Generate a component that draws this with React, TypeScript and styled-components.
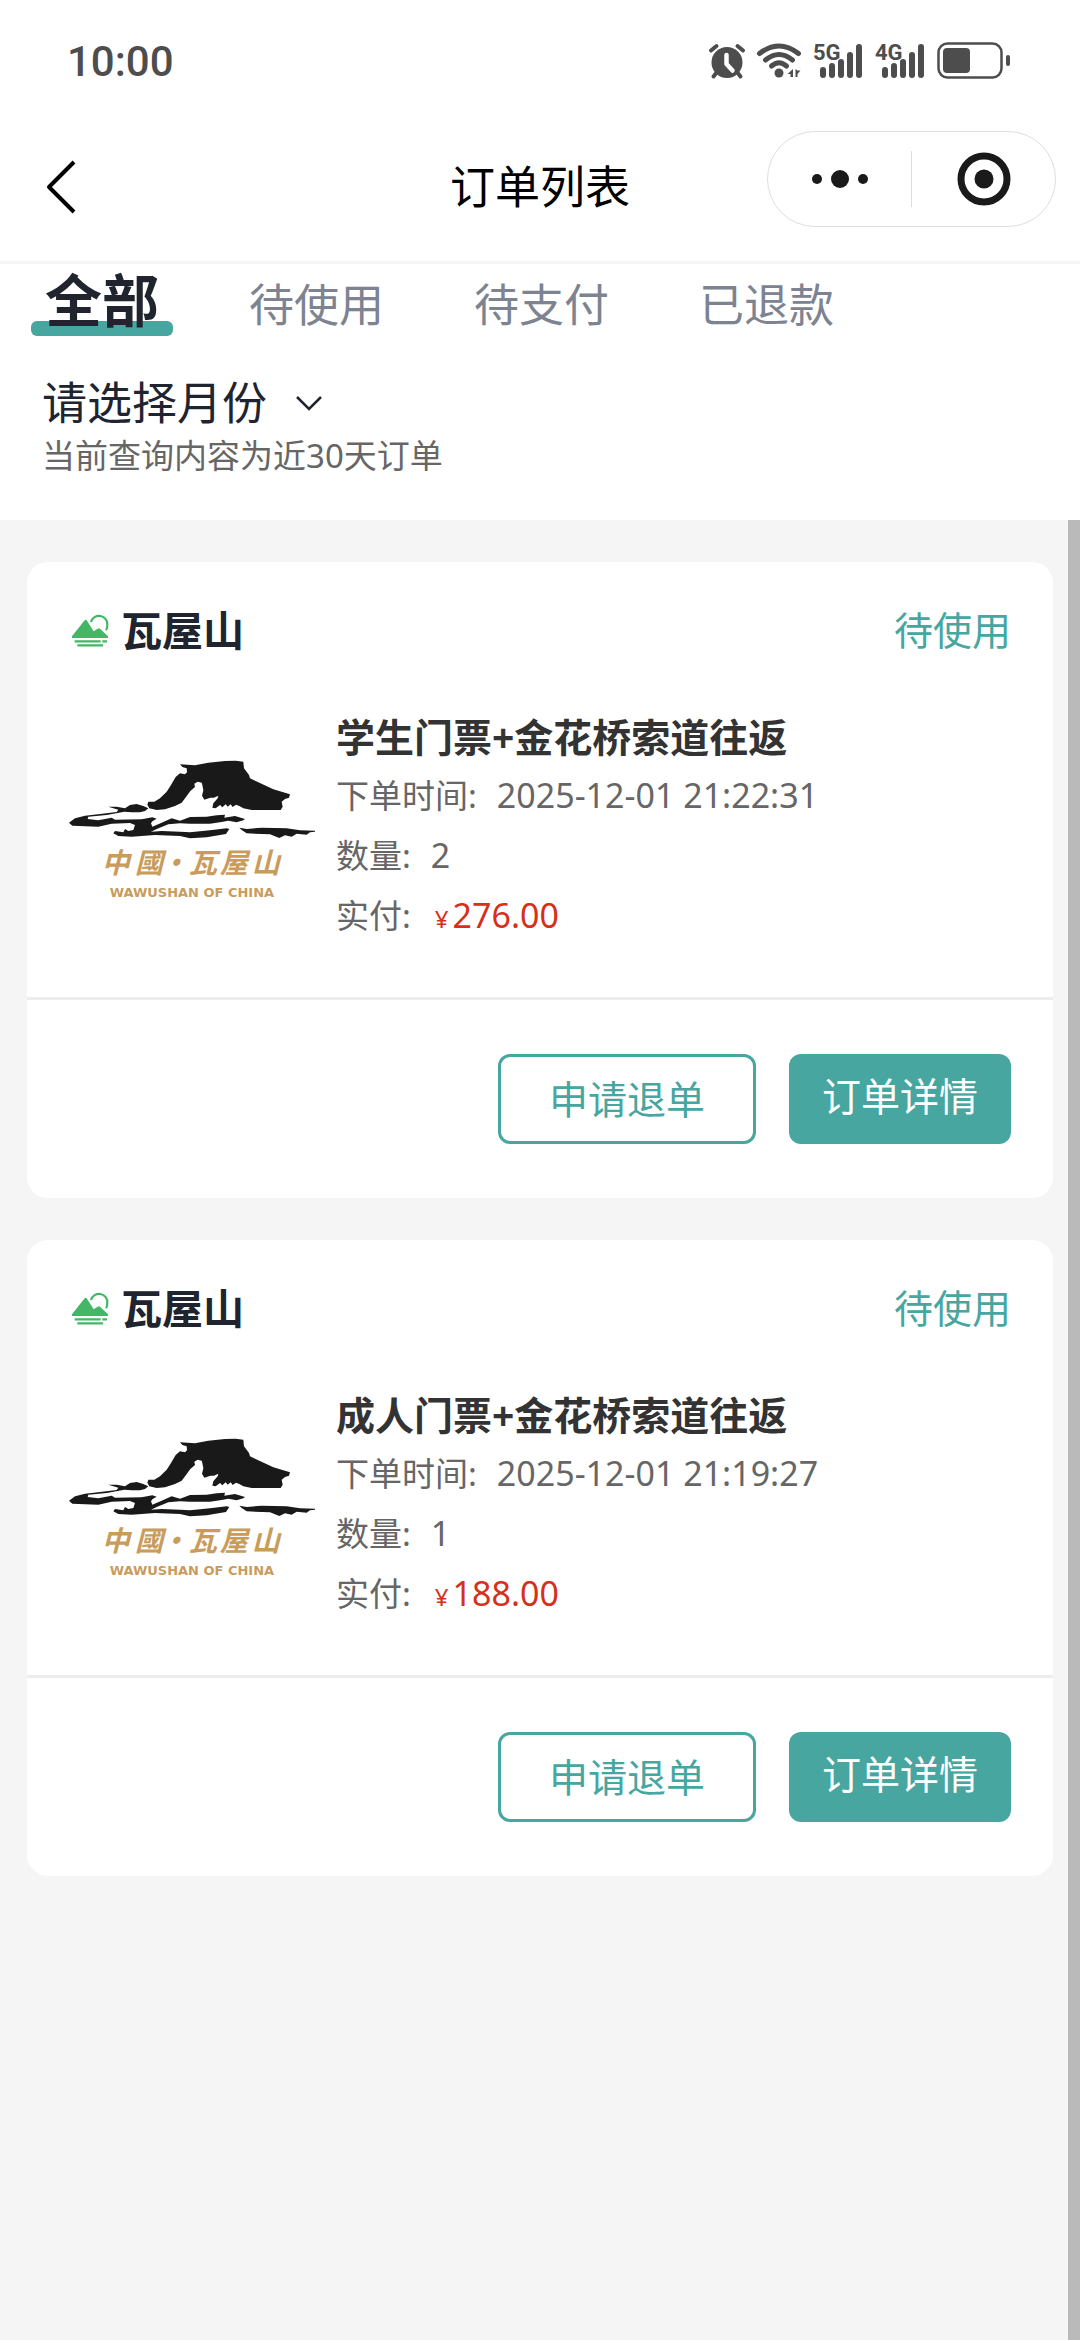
import React, { useState } from "react";
import styled, { createGlobalStyle } from "styled-components";

const color = {
  teal: "#47a69f",
  ink: "#20242f",
  tab: "#7d8391",
  text: "#333333",
  muted: "#666666",
  price: "#d6301a",
  page: "#f5f5f5",
  line: "#ededed",
  status: "#4d4d4d",
  gold: "#c99c5c",
  green: "#43b766",
};

const GlobalStyle = createGlobalStyle`
  * { box-sizing: border-box; }
  body {
    margin: 0;
    background: ${color.page};
    color: ${color.text};
    font-family: "Noto Sans", "Noto Sans CJK SC", sans-serif;
  }
  button, select {
    margin: 0;
    padding: 0;
    border: 0;
    background: none;
    color: inherit;
    font: inherit;
    cursor: pointer;
  }
  h1, h2, h3, p, dl, dd, dt { margin: 0; font-weight: 400; }
`;

const Page = styled.div`
  display: flex;
  flex-direction: column;
  min-height: 100vh;
`;

const Header = styled.header`
  background: #fff;
`;

const StatusBar = styled.div`
  display: flex;
  align-items: center;
  justify-content: space-between;
  height: 112px;
  padding: 12px 69px 0 67px;
  color: ${color.status};
`;

const Clock = styled.time`
  font-family: Roboto, "Noto Sans", sans-serif;
  font-size: 42px;
  font-weight: 500;
  line-height: 60px;
`;

const NavBar = styled.div`
  display: grid;
  grid-template-columns: 1fr auto 1fr;
  align-items: center;
  height: 152px;
  padding: 0 24px;
  border-bottom: 3px solid ${color.page};
`;

const Title = styled.h1`
  color: #000;
  font-size: 45px;
  line-height: 60px;
`;

const BackButton = styled.button`
  display: grid;
  place-items: center;
  justify-self: start;
  width: 74px;
  height: 72px;
`;

const Capsule = styled.div`
  display: flex;
  align-self: start;
  justify-self: end;
  height: 96px;
  margin-top: 19px;
  border: 1px solid #dedede;
  border-radius: 48px;
`;

const CapsuleButton = styled.button`
  display: grid;
  place-items: center;
  width: 143px;
`;

const CapsuleLine = styled.span`
  align-self: center;
  width: 1px;
  height: 56px;
  background: #dedede;
`;

const Filters = styled.section`
  padding-bottom: 41px;
  background: #fff;
`;

const Tabs = styled.div`
  display: flex;
  align-items: baseline;
  gap: 90px;
  height: 72px;
  padding: 0 45px;
`;

const Tab = styled.button<{ $active: boolean }>`
  position: relative;
  z-index: 0;
  color: ${(p) => (p.$active ? color.ink : color.tab)};
  font-size: ${(p) => (p.$active ? 57 : 45)}px;
  font-weight: ${(p) => (p.$active ? 700 : 400)};
  line-height: ${(p) => (p.$active ? 72 : 60)}px;

  &::after {
    content: "";
    display: ${(p) => (p.$active ? "block" : "none")};
    position: absolute;
    z-index: -1;
    right: -14px;
    bottom: 0;
    left: -14px;
    height: 15px;
    border-radius: 6px;
    background: ${color.teal};
  }
`;

const MonthPicker = styled.label`
  display: flex;
  align-items: center;
  gap: 27px;
  width: max-content;
  margin-top: 37px;
  padding-left: 42px;
  color: ${color.ink};
`;

const MonthSelect = styled.select`
  appearance: none;
  font-size: 45px;
  line-height: 60px;
`;

const Hint = styled.p`
  padding-left: 42px;
  color: ${color.muted};
  font-size: 33px;
  line-height: 46px;
`;

const Content = styled.main`
  position: relative;
  flex: 1;
`;

const ScrollThumb = styled.div`
  position: absolute;
  top: 0;
  right: 0;
  bottom: 0;
  width: 12px;
  background: #bababa;
`;

const OrderList = styled.div`
  display: flex;
  flex-direction: column;
  gap: 42px;
  padding: 42px 27px;
`;

const Card = styled.article`
  border-radius: 21px;
  background: #fff;
`;

const CardHead = styled.div`
  display: flex;
  align-items: center;
  gap: 12px;
  padding: 38px 42px 0 45px;
`;

const Venue = styled.h2`
  flex: 1;
  color: ${color.ink};
  font-size: 41px;
  font-weight: 700;
  line-height: 60px;
`;

const State = styled.span`
  color: ${color.teal};
  font-size: 39px;
  line-height: 60px;
`;

const Product = styled.div`
  display: flex;
  align-items: center;
  gap: 21px;
  padding: 49px 42px 52px;
`;

const ProductName = styled.h3`
  color: ${color.text};
  font-size: 39px;
  font-weight: 700;
  line-height: 56px;
`;

const Field = styled.div`
  display: flex;
  align-items: baseline;
  height: 60px;
  color: ${color.muted};
  font-size: 33px;
  line-height: 60px;
`;

const FieldValue = styled.dd<{ $indent: number }>`
  padding-left: ${(p) => p.$indent}px;
  font-size: 34px;
`;

const Price = styled.span`
  color: ${color.price};
`;

const Currency = styled.span`
  margin-right: 4px;
  font-size: 24px;
  line-height: 24px;
`;

const Actions = styled.div`
  display: flex;
  justify-content: flex-end;
  gap: 33px;
  padding: 54px 42px;
  border-top: 3px solid ${color.line};
`;

const OutlineButton = styled.button`
  padding: 0 48px;
  border: 3px solid ${color.teal};
  border-radius: 12px;
  color: ${color.teal};
  font-size: 39px;
  line-height: 84px;
`;

const SolidButton = styled.button`
  padding: 0 33px 6px;
  border-radius: 12px;
  background: ${color.teal};
  color: #fff;
  font-size: 39px;
  line-height: 84px;
`;

const SignalLabel = styled.text`
  font-family: "Liberation Sans Narrow", Roboto, sans-serif;
  font-size: 22px;
  font-weight: 700;
`;

const LogoName = styled.text`
  font-family: "Noto Sans CJK TC", "Noto Sans CJK SC", sans-serif;
  font-size: 84px;
  font-style: italic;
  font-weight: 700;
`;

const LogoCaption = styled.text`
  font-family: "DejaVu Sans", sans-serif;
  font-size: 39px;
  font-weight: 700;
`;

const signalBars = [
  [10, 31],
  [19, 27],
  [28, 23],
  [37, 16],
  [46, 8],
];

function StatusIcons() {
  return (
    <svg width="304" height="44" viewBox="706 40 304 44" fill="currentColor" aria-hidden="true">
      <circle cx="726" cy="62.5" r="15.5" />
      <path
        d="M710 50.500l5.500-4.500M742 50.500l-5.500-4.500M716 72l-3.500 4.500M736 72l3.500 4.500"
        stroke="currentColor"
        strokeWidth="4"
        strokeLinecap="round"
      />
      <path d="M725.500 55v9l6 6.500" fill="none" stroke="#fff" strokeWidth="4.500" strokeLinecap="round" strokeLinejoin="round" />
      <g fill="none" stroke="currentColor" strokeWidth="5" strokeLinecap="round">
        <path d="M758.500 53.500q19.500-15 39 0" />
        <path d="M764.500 60q13.500-11 27 0" />
        <path d="M770.500 66q7.500-6.500 15 0" />
      </g>
      <circle cx="778" cy="73" r="4.500" />
      <path d="M792 69v8h-2.500v-3h-3zM794.500 69v8h2v-3l3-3.500h-3z" />
      {["5G", "4G"].map((name, i) => (
        <g key={name} transform={`translate(${812 + i * 62} 36)`}>
          <SignalLabel x="0" y="24">
            {name}
          </SignalLabel>
          {signalBars.map(([x, top]) => (
            <rect key={x} x={x - 3} y={top} width="6" height={42 - top} rx="3" />
          ))}
        </g>
      ))}
      <rect x="937.500" y="43.500" width="63" height="34" rx="9" fill="none" stroke="currentColor" strokeWidth="2.500" />
      <rect x="942" y="48" width="27" height="25" rx="4" />
      <rect x="1005" y="55" width="4" height="11" rx="2" />
    </svg>
  );
}

function MountainMark() {
  return (
    <svg width="37" height="33" viewBox="17 13 111 99" fill={color.green} aria-hidden="true">
      <path d="M17 85V80L55 32q3-4 6 0L82 65l12-8q4-3 7 0l24 23v5z" />
      <path d="M74 37A25 25 0 0 1 123 46Q123 55 119 62" fill="none" stroke={color.green} strokeWidth="6.500" />
      <path d="M25 92h78v6.500H25zM108 92h14v6.500h-14zM33 104h77v6.500H33z" />
    </svg>
  );
}

function ProductLogo() {
  return (
    <svg width="246" height="150" viewBox="12 -9 738 450" role="img" aria-label="中國·瓦屋山">
      <g fill="#191919">
        <path d="M250 140L247 149 253 160 275 165 300 163 330 153 350 143 363 126 376 108 390 96 388 86 398 80 410 83 412 90 415 106 411 122 418 134 436 128 447 128 460 122 458 130 445 145 442 158 452 160 465 150 472 157 482 148 488 155 497 148 503 156 513 149 523 153 535 160 560 165 647 165 653 155 650 140 660 132 672 128 675 118 625 103 555 70 552 60 537 40 535 20 512 17 480 18 430 23 390 31 345 28 352 36 365 40 366 52 360 58 345 55 332 66 318 90 305 110 285 130 268 140Z" />
        <path d="M130 155L155 155 180 160 195 150 215 147 235 153 250 160 240 168 225 172 200 172 178 170 125 180 70 185 68 192 100 196 140 188 150 194 230 193 262 187 275 191 262 199 258 205 262 215 290 203 320 190 345 197 375 186 425 185 455 181 480 179 478 188 510 183 540 192 535 196 515 202 490 197 470 201 435 206 375 206 345 205 310 208 275 222 258 230 290 228 345 230 375 232 435 226 485 220 493 222 483 237 425 247 375 250 345 243 270 240 200 245 160 243 145 235 150 228 175 232 180 222 190 228 205 225 210 210 195 204 140 206 100 215 22 212 12 203 30 190 60 182 80 180 155 171 160 164Z" />
        <path d="M523 218L545 222 590 218 665 220 705 226 750 227 750 230 735 232 725 239 695 236 680 245 660 241 643 249 615 238 545 235 530 225Z" />
      </g>
      <g fill={color.gold}>
        <LogoName x="110 210 286 372 464 560" y="355">
          中國·瓦屋山
        </LogoName>
        <LogoCaption x="134" y="427">
          WAWUSHAN OF CHINA
        </LogoCaption>
      </g>
    </svg>
  );
}

type Order = { id: string; name: string; time: string; count: number; paid: string };

const orders: Order[] = [
  { id: "a", name: "学生门票+金花桥索道往返", time: "2025-12-01 21:22:31", count: 2, paid: "276.00" },
  { id: "b", name: "成人门票+金花桥索道往返", time: "2025-12-01 21:19:27", count: 1, paid: "188.00" },
];

function OrderCard({ order }: { order: Order }) {
  return (
    <Card>
      <CardHead>
        <MountainMark />
        <Venue>瓦屋山</Venue>
        <State>待使用</State>
      </CardHead>
      <Product>
        <ProductLogo />
        <div>
          <ProductName>{order.name}</ProductName>
          <dl>
            <Field>
              <dt>下单时间:</dt>
              <FieldValue $indent={20}>{order.time}</FieldValue>
            </Field>
            <Field>
              <dt>数量:</dt>
              <FieldValue $indent={20}>{order.count}</FieldValue>
            </Field>
            <Field>
              <dt>实付:</dt>
              <FieldValue $indent={24}>
                <Price>
                  <Currency>¥</Currency>
                  {order.paid}
                </Price>
              </FieldValue>
            </Field>
          </dl>
        </div>
      </Product>
      <Actions>
        <OutlineButton type="button">申请退单</OutlineButton>
        <SolidButton type="button">订单详情</SolidButton>
      </Actions>
    </Card>
  );
}

const tabs = ["全部", "待使用", "待支付", "已退款"];

export default function App() {
  const [active, setActive] = useState(tabs[0]);
  return (
    <Page>
      <GlobalStyle />
      <Header>
        <StatusBar>
          <Clock>10:00</Clock>
          <StatusIcons />
        </StatusBar>
        <NavBar>
          <BackButton type="button" aria-label="返回">
            <svg width="32" height="56" viewBox="0 0 32 56" fill="none" stroke="#000" strokeWidth="4">
              <path d="M29 3L4 28l25 25" strokeLinejoin="round" />
            </svg>
          </BackButton>
          <Title>订单列表</Title>
          <Capsule>
            <CapsuleButton type="button" aria-label="更多">
              <svg width="58" height="20" viewBox="0 0 58 20" fill="#1a1a1a">
                <circle cx="6" cy="10" r="5" />
                <circle cx="29" cy="10" r="9" />
                <circle cx="52" cy="10" r="5" />
              </svg>
            </CapsuleButton>
            <CapsuleLine />
            <CapsuleButton type="button" aria-label="关闭">
              <svg width="54" height="54" viewBox="0 0 54 54">
                <circle cx="27" cy="27" r="23" fill="none" stroke="#1a1a1a" strokeWidth="7" />
                <circle cx="27" cy="27" r="9.500" fill="#1a1a1a" />
              </svg>
            </CapsuleButton>
          </Capsule>
        </NavBar>
      </Header>
      <Filters>
        <Tabs role="tablist">
          {tabs.map((name) => (
            <Tab
              key={name}
              type="button"
              role="tab"
              aria-selected={name === active}
              $active={name === active}
              onClick={() => setActive(name)}
            >
              {name}
            </Tab>
          ))}
        </Tabs>
        <MonthPicker>
          <MonthSelect aria-label="请选择月份" defaultValue="">
            <option value="">请选择月份</option>
            <option value="12">12月</option>
            <option value="11">11月</option>
          </MonthSelect>
          <svg width="28" height="18" viewBox="0 0 28 18" fill="none" stroke="currentColor" strokeWidth="2.500">
            <path d="M2 3l12 12L26 3" />
          </svg>
        </MonthPicker>
        <Hint>当前查询内容为近30天订单</Hint>
      </Filters>
      <Content>
        <OrderList>
          {orders.map((order) => (
            <OrderCard key={order.id} order={order} />
          ))}
        </OrderList>
        <ScrollThumb />
      </Content>
    </Page>
  );
}
